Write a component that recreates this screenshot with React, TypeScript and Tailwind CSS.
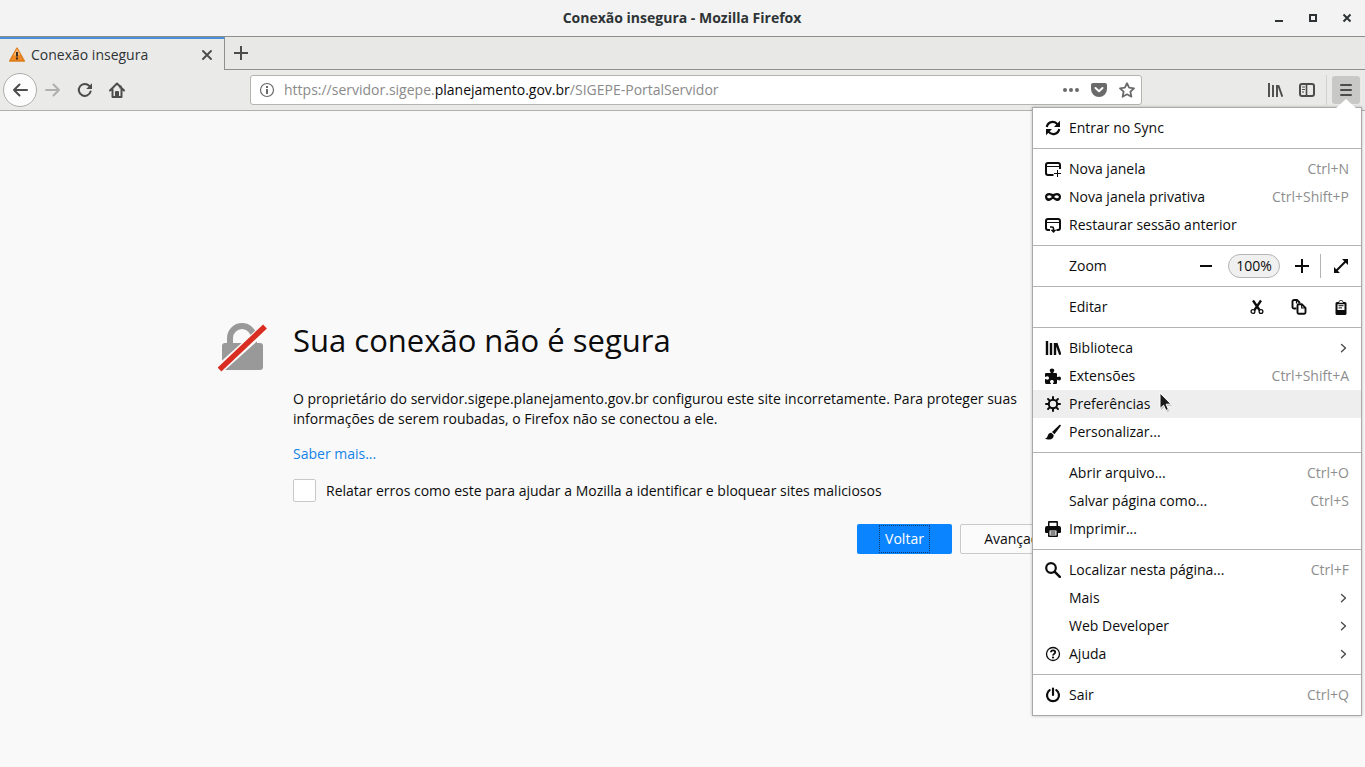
import React from 'react';

type IconName =
  | 'back' | 'forward' | 'reload' | 'home' | 'info' | 'dots' | 'pocket' | 'star'
  | 'library' | 'libraryBold' | 'sidebar' | 'menu' | 'sync' | 'window' | 'private' | 'restore'
  | 'minus' | 'plus' | 'expand' | 'cut' | 'copy' | 'paste' | 'addon' | 'gear'
  | 'brush' | 'print' | 'search' | 'help' | 'quit' | 'chevron' | 'close';

const line = { fill: 'none', stroke: 'currentColor', strokeWidth: 2 } as const;
const round = { ...line, strokeLinecap: 'round', strokeLinejoin: 'round' } as const;

const art: Record<IconName, React.ReactNode> = {
  back: <path {...round} d="M15 8H2M7.500 2.500L2 8l5.500 5.500" />,
  forward: <path {...round} d="M1 8h13M8.500 2.500L14 8l-5.500 5.500" />,
  reload: (
    <>
      <path {...round} d="M13.600 9.500A6 6 0 1 1 12.300 3.900" />
      <path fill="currentColor" d="M15 1.200v5.300a.5.5 0 0 1-.5.5H9.200z" />
    </>
  ),
  home: (
    <>
      <path {...round} d="M1 8.500L8 1.500l7 7M3.500 7.500V15h9V7.500" />
      <path fill="currentColor" fillRule="evenodd" d="M6 14.500V10a1 1 0 0 1 1-1h2a1 1 0 0 1 1 1v4.500zM10.500 3.500h2v3h-2z" />
    </>
  ),
  info: (
    <>
      <circle cx="8" cy="8" r="6.500" fill="none" stroke="currentColor" strokeWidth="1.200" />
      <path fill="currentColor" d="M7 4h2v2H7zM7 7h2v5H7z" />
    </>
  ),
  dots: (
    <g fill="currentColor">
      <circle cx="2" cy="8" r="2" /><circle cx="8" cy="8" r="2" /><circle cx="14" cy="8" r="2" />
    </g>
  ),
  pocket: (
    <>
      <path fill="currentColor" d="M2 1h12a2 2 0 0 1 2 2v4a8 8 0 0 1-16 0V3a2 2 0 0 1 2-2z" />
      <path fill="none" stroke="#fff" strokeWidth="2" strokeLinecap="round" strokeLinejoin="round" d="M4.500 6L8 9.300 11.500 6" />
    </>
  ),
  star: <path fill="none" stroke="currentColor" strokeWidth="1.800" strokeLinejoin="round" d="M8 1.200l2.100 4.500 4.900.6-3.600 3.400 1 5L8 12.300l-4.400 2.400 1-5L1 6.300l4.900-.6z" />,
  library: <path {...line} d="M2 1v14M6 3v12M10 3v12M11.300 3.200l4 11.500" strokeWidth="1.900" />,
  libraryBold: <path {...line} d="M2 1v14M6 3v12M10 3v12M11.300 3.200l4 11.500" strokeWidth="2.400" />,
  sidebar: (
    <>
      <rect {...line} x="1" y="2" width="14" height="12" rx="2" />
      <path {...line} d="M7.500 2v12" strokeWidth="1.600" />
      <path {...line} d="M3 5h3M3 7.500h3M3 10h2" strokeWidth="1" />
    </>
  ),
  menu: <path {...round} d="M3 3h10M3 8h10M3 13h10" />,
  sync: (
    <>
      <path {...line} strokeWidth="2.200" d="M1.800 7A6 6 0 0 1 12.500 4.300M14.200 9A6 6 0 0 1 3.500 11.700" />
      <path fill="currentColor" d="M15 .8V7H9zM1 15.200V9h6z" />
    </>
  ),
  window: (
    <>
      <path {...line} d="M8.500 14H3a2 2 0 0 1-2-2V4a2 2 0 0 1 2-2h10a2 2 0 0 1 2 2v4" />
      <path {...line} d="M1 5.500h14" strokeWidth="1" />
      <path {...line} d="M12.500 9v7M9 12.500h7" strokeWidth="1" />
    </>
  ),
  private: <path fill="currentColor" fillRule="evenodd" d="M4.200 4C6.200 4 7 5 8 5s1.800-1 3.800-1C14.400 4 16 5.300 16 7.800c0 2.400-1.500 4.200-3.600 4.200C10.300 12 9 10 8 10s-2.300 2-4.400 2C1.500 12 0 10.200 0 7.800 0 5.300 1.600 4 4.200 4zM4.300 6.300C3.100 6.300 2.300 7.200 2 7.900c.5.900 1.300 1.400 2.300 1.400s1.900-.5 2.400-1.200c-.4-1-1.200-1.800-2.400-1.800zm7.400 0c-1.200 0-2 .8-2.400 1.800.5.700 1.400 1.200 2.400 1.200s1.800-.5 2.300-1.400c-.3-.7-1.100-1.600-2.300-1.600z" />,
  restore: (
    <>
      <path {...line} d="M5 13H3a2 2 0 0 1-2-2V4a2 2 0 0 1 2-2h10a2 2 0 0 1 2 2v7a2 2 0 0 1-2 2h-1.500" />
      <path {...line} d="M1 5.500h14" strokeWidth="1" />
      <path {...line} d="M5 10h2a1.500 1.500 0 0 1 1.500 1.500V14" strokeWidth="1.600" />
      <path fill="currentColor" d="M5.500 12.800h6L8.500 16z" />
    </>
  ),
  minus: <path {...line} d="M2 8h12" />,
  plus: <path {...line} d="M1 8h14M8 1v14" />,
  expand: (
    <>
      <path {...line} d="M3 13L13 3" />
      <path fill="currentColor" d="M9 1h6v6zM1 9v6h6z" />
    </>
  ),
  cut: (
    <>
      <path {...line} strokeWidth="2.300" d="M4 1.500l6.500 9.500M12 1.500L5.500 11" />
      <circle {...line} strokeWidth="1.300" cx="4" cy="12.500" r="1.900" />
      <circle {...line} strokeWidth="1.300" cx="12" cy="12.500" r="1.900" />
    </>
  ),
  copy: (
    <>
      <path {...line} strokeLinejoin="round" strokeWidth="1.900" d="M5.500 9.500H3A1.500 1.500 0 0 1 1.500 8V2.500A1.500 1.500 0 0 1 3 1h3l3 3" />
      <path {...line} strokeLinejoin="round" strokeWidth="1.900" d="M6.500 6.500A1.200 1.200 0 0 1 7.700 5.300h3.300l3.500 3.500v4.800a1.200 1.200 0 0 1-1.200 1.200H7.700a1.200 1.200 0 0 1-1.200-1.200z" />
      <path {...line} strokeWidth="1.200" d="M10.700 5.500V9H14M5.500 1v3.500" />
    </>
  ),
  paste: (
    <>
      <path fill="currentColor" d="M4 3h1.500a2.600 2.600 0 0 1 5 0H12a1.500 1.500 0 0 1 1.500 1.500v10A1.500 1.500 0 0 1 12 16H4a1.500 1.500 0 0 1-1.500-1.500v-10A1.500 1.500 0 0 1 4 3z" />
      <path fill="#fff" d="M4.500 5.200h7V11h-7zM6.300 3a1.800 1.800 0 0 1 3.400 0l.4.800H5.900z" />
      <path {...line} strokeWidth="1" d="M5.500 6.700h5M5.500 8.900h3.500" />
    </>
  ),
  addon: <path fill="currentColor" d="M1 5h4.200c.4 0 .7-.5.3-1C5 3.500 4.700 3.100 4.700 2.500 4.700 1.400 5.700.5 7 .5s2.300.9 2.300 2c0 .6-.3 1-.8 1.500-.4.500-.1 1 .3 1H11a1 1 0 0 1 1 1v2.500c0 .5.500.8 1 .4.400-.3.700-.5 1.200-.5 1 0 1.800.8 1.800 2s-.8 2-1.800 2c-.5 0-.8-.2-1.200-.6-.5-.3-1 0-1 .5V15a1 1 0 0 1-1 1H8.500c-.5 0-.8-.5-.4-1 .4-.4.700-.8.700-1.300 0-1-.8-1.700-1.900-1.700s-1.900.7-1.900 1.700c0 .5.300.9.700 1.300.4.500.1 1-.4 1H1.500A1.500 1.500 0 0 1 0 14.500v-3c0-.5.500-.8 1-.4.400.3.700.6 1.300.6 1 0 1.700-.7 1.700-1.700s-.7-1.800-1.700-1.800c-.6 0-.9.300-1.300.6-.5.300-1 0-1-.4V6a1 1 0 0 1 1-1z" />,
  gear: (
    <>
      <circle {...line} cx="8" cy="8" r="4.200" />
      <path {...round} d="M8 1v2.500M8 12.500V15M1 8h2.500M12.500 8H15M3.050 3.050l1.600 1.600M11.350 11.350l1.600 1.600M12.950 3.050l-1.600 1.600M4.650 11.350l-1.600 1.600" />
    </>
  ),
  brush: <path fill="currentColor" d="M14.600.8c.9-.5 1.700.5 1.100 1.300L9.500 10.200 7 8zM6.200 8.800l2.500 2.200c.1 2.500-1.500 4.500-4.500 4.500C2.500 15.500 1 15.200 0 14.500c1.500-.2 2-.9 2.500-2.300.5-1.700 1.700-3.300 3.700-3.400z" />,
  print: (
    <>
      <path fill="currentColor" fillRule="evenodd" d="M3 1a1 1 0 0 1 1-1h8a1 1 0 0 1 1 1v4h1a2 2 0 0 1 2 2v4a1 1 0 0 1-1 1h-2v3a1 1 0 0 1-1 1H4a1 1 0 0 1-1-1v-3H1a1 1 0 0 1-1-1V7a2 2 0 0 1 2-2h1zm1.500.7V5h7V1.700zM4.500 9.500v5h7v-5z" />
      <path {...line} strokeWidth="1" d="M5.500 11h5M5.500 13h5" />
    </>
  ),
  search: (
    <>
      <circle {...line} cx="6" cy="6" r="4.800" strokeWidth="2.200" />
      <path {...line} strokeLinecap="round" d="M9.800 9.800l5 5" strokeWidth="2.500" />
    </>
  ),
  help: (
    <>
      <circle {...line} strokeWidth="1.300" cx="8" cy="8" r="6.500" />
      <path {...line} strokeWidth="1.800" d="M5.900 6.300C5.900 5 6.800 4.300 8 4.300s2.200.8 2.200 1.900c0 1.600-2.200 1.700-2.200 3.300" />
      <circle fill="currentColor" cx="8" cy="11.500" r="1.100" />
    </>
  ),
  quit: <path {...round} strokeWidth="2.200" d="M8 1.500V8M4.700 3.200a6 6 0 1 0 6.600 0" />,
  chevron: <path fill="none" stroke="currentColor" strokeWidth="1.400" strokeLinecap="round" strokeLinejoin="round" d="M6.500 4.500L10.500 8l-4 3.800" />,
  close: <path {...line} strokeLinecap="round" strokeWidth="1.900" d="M4 4l8 8M12 4l-8 8" />,
};

function Icon({ name, className = 'size-4' }: { name: IconName; className?: string }) {
  return (
    <svg viewBox="0 0 16 16" className={`shrink-0 ${className}`} aria-hidden="true">
      {art[name]}
    </svg>
  );
}

function IconButton({ name, label, className = '' }: { name: IconName; label: string; className?: string }) {
  return (
    <button type="button" aria-label={label} className={`flex size-8 shrink-0 items-center justify-center ${className}`}>
      <Icon name={name} />
    </button>
  );
}

function TitleBar() {
  return (
    <header className="flex h-9 items-center bg-[#f3f3f3] text-[#2e3436]">
      <div className="flex-1" />
      <h1 className="text-[14px] leading-5 font-bold">Conexão insegura - Mozilla Firefox</h1>
      <div className="flex flex-1 justify-end pr-px">
        <button type="button" aria-label="Minimizar" className="flex h-8 w-[34px] items-center justify-center">
          <svg viewBox="0 0 10 10" className="size-[10px]"><path d="M1 7h8v2H1z" fill="currentColor" /></svg>
        </button>
        <button type="button" aria-label="Maximizar" className="flex h-8 w-[34px] items-center justify-center">
          <svg viewBox="0 0 10 10" className="size-[10px]"><path d="M2 2h6v6H2z" fill="none" stroke="currentColor" strokeWidth="2" /></svg>
        </button>
        <button type="button" aria-label="Fechar janela" className="flex h-8 w-[34px] items-center justify-center">
          <svg viewBox="0 0 10 10" className="size-[10px]"><path d="M1.500 1.500l7 7M8.500 1.500l-7 7" fill="none" stroke="currentColor" strokeWidth="2" /></svg>
        </button>
      </div>
    </header>
  );
}

function Tabs() {
  return (
    <div className="flex h-[34px] border-t border-[#8f8f8d] bg-[#e8e8e7] text-[#4c4c4c]">
      <div className="flex w-[225px] items-center border-t-2 border-r border-t-[#4a90d9] border-r-[#8f8f8d] bg-[#eaeae9] pl-2 pr-[9px]">
        <svg viewBox="0 0 18 18" className="size-[18px] shrink-0" aria-hidden="true">
          <path d="M9 2.200L16.300 15H1.700z" fill="#f08a24" stroke="#dc7c1c" strokeWidth="1.500" strokeLinejoin="round" />
          <path d="M9 2.500L12.500 9 5.300 9.500z" fill="#f8b36a" />
          <path d="M8 6h2v4.500H8zM8 11.500h2v2H8z" fill="#3b3028" />
        </svg>
        <span className="ml-[5px] flex-1 text-[14px] leading-5 text-[#2e3436]">Conexão insegura</span>
        <button type="button" aria-label="Fechar aba"><Icon name="close" /></button>
      </div>
      <button type="button" aria-label="Nova aba" className="flex w-8 items-center justify-center border-b border-[#8f8f8d]">
        <Icon name="plus" />
      </button>
      <div className="flex-1 border-b border-[#8f8f8d]" />
    </div>
  );
}

function NavBar() {
  return (
    <nav className="flex h-[41px] items-center border-b border-[#b0b0af] bg-[#eaeae9] pl-[3px] text-[#4c4c4c]">
      <button type="button" aria-label="Voltar uma página" className="flex size-[34px] shrink-0 items-center justify-center rounded-full border border-[#adadab] bg-[#fcfcfc]">
        <Icon name="back" />
      </button>
      <IconButton name="forward" label="Avançar uma página" className="text-[#b0b0b0]" />
      <IconButton name="reload" label="Recarregar" />
      <IconButton name="home" label="Página inicial" />
      <div className="w-[117px] shrink-0" />
      <div className="flex h-[30px] min-w-0 flex-1 items-center rounded-[3px] border border-[#b4b4b3] bg-white pl-2 pr-[6px] text-[#6a6a6a]">
        <Icon name="info" />
        <a href="#url" className="ml-[9px] flex-1 truncate text-[14px] leading-5 text-[#8a8a8a]">
          https://servidor.sigepe.<span className="text-[#0c0c0d]">planejamento.gov.br</span>/SIGEPE-PortalServidor
        </a>
        <div className="flex gap-3">
          <button type="button" aria-label="Ações da página"><Icon name="dots" /></button>
          <button type="button" aria-label="Salvar no Pocket"><Icon name="pocket" /></button>
          <button type="button" aria-label="Favoritar"><Icon name="star" /></button>
        </div>
      </div>
      <div className="w-[117px] shrink-0" />
      <IconButton name="library" label="Biblioteca" />
      <IconButton name="sidebar" label="Barra lateral" />
      <div className="ml-[3px] h-[30px] w-px bg-[#d2d2d1]" />
      <button type="button" aria-label="Abrir menu" className="ml-[5px] mr-[5px] flex h-7 w-7 shrink-0 items-center justify-center rounded-[3px] bg-[#c8c8c7]">
        <Icon name="menu" />
      </button>
    </nav>
  );
}

function ErrorPage() {
  return (
    <main className="flex flex-1 items-center justify-center bg-[#f9f9f9] pb-1 text-[#0c0c0d]">
      <div className="flex w-full max-w-[929px]">
        <svg viewBox="0 0 50 50" className="mt-[3px] size-[50px] shrink-0" aria-hidden="true">
          <path d="M12 22v-7a12 12 0 0 1 24 0v7" fill="none" stroke="#999" strokeWidth="6" />
          <rect x="4" y="20" width="41" height="27" rx="3" fill="#999" />
          <path d="M1 46.500L47.500 4.500" stroke="#f9f9f9" strokeWidth="9" />
          <path d="M1.500 46.500L47 3.500" stroke="#d92d21" strokeWidth="5.500" />
        </svg>
        <div className="ml-[25px] mr-[75px] flex-1 text-[14px] leading-5">
          <h2 className="text-[31px] leading-10">Sua conexão não é segura</h2>
          <p className="mt-[29px]">
            O proprietário do servidor.sigepe.planejamento.gov.br configurou este site incorretamente. Para proteger suas
            <br />
            informações de serem roubadas, o Firefox não se conectou a ele.
          </p>
          <p className="mt-[15px]"><a href="#saber-mais" className="text-[#1583e8]">Saber mais...</a></p>
          <label className="mt-[15px] flex items-center gap-[10px]">
            <input type="checkbox" className="size-[23px] appearance-none rounded-[2px] border border-[#c9c9c9] bg-white" />
            Relatar erros como este para ajudar a Mozilla a identificar e bloquear sites maliciosos
          </label>
          <div className="mt-[22px] flex justify-end gap-2">
            <button type="button" className="flex h-[30px] w-[95px] items-center justify-center rounded-[2px] bg-[#0a84ff] text-white">
              <span className="border border-dotted border-[#0c3c78] px-[5px] leading-[26px]">Voltar</span>
            </button>
            <button type="button" className="h-[30px] w-28 rounded-[2px] border border-[#c9c9c9] bg-[#fbfbfb]">Avançado</button>
          </div>
        </div>
      </div>
    </main>
  );
}

function Item({ icon, label, keys, more, active }: { icon?: IconName; label: string; keys?: string; more?: boolean; active?: boolean }) {
  return (
    <button type="button" className={`flex h-7 w-full items-center pl-3 pr-3 text-left ${active ? 'bg-[#eeeeee]' : ''}`}>
      {icon ? <Icon name={icon} /> : <span className="size-4 shrink-0" />}
      <span className="ml-2 flex-1">{label}</span>
      {keys && <span className="text-[#8e8e8e]">{keys}</span>}
      {more && <Icon name="chevron" className="-mr-[2px] size-4 text-[#4c4c4c]" />}
    </button>
  );
}

function Group({ children }: { children: React.ReactNode }) {
  return <div className="border-b border-[#b3b3b3] py-[6px] last-of-type:border-b-0">{children}</div>;
}

function AppMenu() {
  return (
    <aside className="absolute right-[3px] top-[107px] w-[330px] border border-[#a9a9a9] bg-white text-[14px] leading-5 text-[#0c0c0d] shadow-[0_0_3px_rgba(0,0,0,0.25)]">
      <svg viewBox="0 0 22 10" className="absolute -top-[9px] right-1 h-[10px] w-[22px]" aria-hidden="true">
        <path d="M0 10L11 0l11 10z" fill="#fff" />
      </svg>
      <Group><Item icon="sync" label="Entrar no Sync" /></Group>
      <Group>
        <Item icon="window" label="Nova janela" keys="Ctrl+N" />
        <Item icon="private" label="Nova janela privativa" keys="Ctrl+Shift+P" />
        <Item icon="restore" label="Restaurar sessão anterior" />
      </Group>
      <Group>
        <div className="flex h-7 items-center pl-9 pr-3">
          <span className="flex-1">Zoom</span>
          <button type="button" aria-label="Reduzir"><Icon name="minus" /></button>
          <button type="button" className="ml-[14px] flex h-6 w-[52px] items-center justify-center rounded-full border border-[#b5b5b5] bg-[#f0f0f0]">100%</button>
          <button type="button" aria-label="Ampliar" className="ml-[14px]"><Icon name="plus" /></button>
          <span className="ml-[10px] h-6 w-px bg-[#b3b3b3]" />
          <button type="button" aria-label="Tela inteira" className="ml-3"><Icon name="expand" /></button>
        </div>
      </Group>
      <Group>
        <div className="flex h-7 items-center gap-[26px] pl-9 pr-3">
          <span className="flex-1">Editar</span>
          <button type="button" aria-label="Recortar"><Icon name="cut" /></button>
          <button type="button" aria-label="Copiar"><Icon name="copy" /></button>
          <button type="button" aria-label="Colar"><Icon name="paste" /></button>
        </div>
      </Group>
      <Group>
        <Item icon="libraryBold" label="Biblioteca" more />
        <Item icon="addon" label="Extensões" keys="Ctrl+Shift+A" />
        <Item icon="gear" label="Preferências" active />
        <Item icon="brush" label="Personalizar..." />
      </Group>
      <Group>
        <Item label="Abrir arquivo..." keys="Ctrl+O" />
        <Item label="Salvar página como..." keys="Ctrl+S" />
        <Item icon="print" label="Imprimir..." />
      </Group>
      <Group>
        <Item icon="search" label="Localizar nesta página..." keys="Ctrl+F" />
        <Item label="Mais" more />
        <Item label="Web Developer" more />
        <Item icon="help" label="Ajuda" more />
      </Group>
      <Group><Item icon="quit" label="Sair" keys="Ctrl+Q" /></Group>
      <svg viewBox="0 0 14 22" className="pointer-events-none absolute left-[125px] top-[284px] h-[22px] w-[14px]" aria-hidden="true">
        <path d="M3 2.500v15.500l3.600-3.300 2.300 5.300 2.500-1.100-2.300-5.200H14z" fill="#000" opacity="0.2" />
        <path d="M2 1v15.500l3.600-3.300 2.300 5.300 2.500-1.100-2.300-5.200H13z" fill="#1a1a1a" stroke="#fff" strokeWidth="1" />
      </svg>
    </aside>
  );
}

export default function App() {
  return (
    <div className="relative flex min-h-screen flex-col bg-[#f9f9f9] font-['Open_Sans','Noto_Sans',sans-serif]">
      <TitleBar />
      <Tabs />
      <NavBar />
      <ErrorPage />
      <AppMenu />
    </div>
  );
}
